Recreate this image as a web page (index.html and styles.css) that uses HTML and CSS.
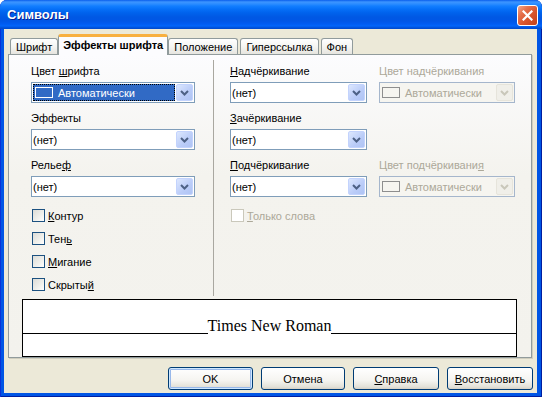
FILE: index.html
```html
<!DOCTYPE html>
<html>
<head>
  <meta charset="utf-8">
  <title>Символы</title>
  <link rel="stylesheet" href="styles.css">
</head>
<body>

<div class="window">

  <div class="titlebar">
    <span class="title">Символы</span>
    <span class="close">
      <svg width="11" height="11" viewBox="0 0 11 11"><path d="M1.5 1.5 L9.5 9.5 M9.5 1.5 L1.5 9.5" stroke="#fff" stroke-width="2.2" stroke-linecap="square"/></svg>
    </span>
  </div>

  <div class="client">

    <div class="tabs">
      <div class="tab">Шрифт</div>
      <div class="tab active">Эффекты шрифта</div>
      <div class="tab">Положение</div>
      <div class="tab">Гиперссылка</div>
      <div class="tab">Фон</div>
    </div>

    <div class="page">
      <div class="columns">

        <div class="col col-left">
          <div class="field">
            <label>Цвет <u>ш</u>рифта</label>
            <div class="combo">
              <span class="combo-value selected"><span class="swatch"></span>Автоматически</span>
              <span class="combo-btn"><svg width="9" height="6" viewBox="0 0 9 6"><path d="M1 1 L4.5 4.5 L8 1" fill="none" stroke="#4D6185" stroke-width="2"/></svg></span>
            </div>
          </div>
          <div class="field">
            <label>Эффекты</label>
            <div class="combo">
              <span class="combo-value">(нет)</span>
              <span class="combo-btn"><svg width="9" height="6" viewBox="0 0 9 6"><path d="M1 1 L4.5 4.5 L8 1" fill="none" stroke="#4D6185" stroke-width="2"/></svg></span>
            </div>
          </div>
          <div class="field">
            <label>Релье<u>ф</u></label>
            <div class="combo">
              <span class="combo-value">(нет)</span>
              <span class="combo-btn"><svg width="9" height="6" viewBox="0 0 9 6"><path d="M1 1 L4.5 4.5 L8 1" fill="none" stroke="#4D6185" stroke-width="2"/></svg></span>
            </div>
          </div>
          <div class="checks">
            <div class="check"><span class="box"></span><span><u>К</u>онтур</span></div>
            <div class="check"><span class="box"></span><span>Тен<u>ь</u></span></div>
            <div class="check"><span class="box"></span><span><u>М</u>игание</span></div>
            <div class="check"><span class="box"></span><span>Скрыты<u>й</u></span></div>
          </div>
        </div>

        <div class="sep"></div>

        <div class="col col-right">
          <div class="row">
            <div class="field wide">
              <label><u>Н</u>адчёркивание</label>
              <div class="combo">
                <span class="combo-value">(нет)</span>
                <span class="combo-btn"><svg width="9" height="6" viewBox="0 0 9 6"><path d="M1 1 L4.5 4.5 L8 1" fill="none" stroke="#4D6185" stroke-width="2"/></svg></span>
              </div>
            </div>
            <div class="field narrow disabled">
              <label>Цвет надчёркивания</label>
              <div class="combo">
                <span class="combo-value"><span class="swatch"></span>Автоматически</span>
                <span class="combo-btn"><svg width="9" height="6" viewBox="0 0 9 6"><path d="M1 1 L4.5 4.5 L8 1" fill="none" stroke="#C9C7BA" stroke-width="2"/></svg></span>
              </div>
            </div>
          </div>
          <div class="row">
            <div class="field wide">
              <label><u>З</u>ачёркивание</label>
              <div class="combo">
                <span class="combo-value">(нет)</span>
                <span class="combo-btn"><svg width="9" height="6" viewBox="0 0 9 6"><path d="M1 1 L4.5 4.5 L8 1" fill="none" stroke="#4D6185" stroke-width="2"/></svg></span>
              </div>
            </div>
          </div>
          <div class="row">
            <div class="field wide">
              <label><u>П</u>одчёркивание</label>
              <div class="combo">
                <span class="combo-value">(нет)</span>
                <span class="combo-btn"><svg width="9" height="6" viewBox="0 0 9 6"><path d="M1 1 L4.5 4.5 L8 1" fill="none" stroke="#4D6185" stroke-width="2"/></svg></span>
              </div>
            </div>
            <div class="field narrow disabled">
              <label>Цвет подчёркивани<u>я</u></label>
              <div class="combo">
                <span class="combo-value"><span class="swatch"></span>Автоматически</span>
                <span class="combo-btn"><svg width="9" height="6" viewBox="0 0 9 6"><path d="M1 1 L4.5 4.5 L8 1" fill="none" stroke="#C9C7BA" stroke-width="2"/></svg></span>
              </div>
            </div>
          </div>
          <div class="checks">
            <div class="check disabled"><span class="box"></span><span><u>Т</u>олько слова</span></div>
          </div>
        </div>

      </div>

      <div class="preview">
        <div class="preview-line">
          <span class="rule"></span>
          <span class="sample">Times New Roman</span>
          <span class="rule"></span>
        </div>
      </div>
    </div>

    <div class="buttons">
      <button type="button" class="btn default">OK</button>
      <button type="button" class="btn cancel">Отмена</button>
      <button type="button" class="btn"><u>С</u>правка</button>
      <button type="button" class="btn"><u>В</u>осстановить</button>
    </div>

  </div>

</div>

</body>
</html>
```

FILE: styles.css
```css
body {
  margin: 0;
  background: #fff;
  font-family: "Liberation Sans", Arial, sans-serif;
  font-size: 11px;
  color: #000;
}

u {
  text-decoration-thickness: 1px;
  text-underline-offset: 1px;
}

.window {
  width: 542px;
  height: 397px;
  display: flex;
  flex-direction: column;
  background: #0055E5;
  border-radius: 7px 7px 0 0;
  box-shadow: inset 1px 0 #0831D9, inset -1px 0 #001EA0, inset 0 -1px #001EA0;
}

/* title bar */

.titlebar {
  height: 29px;
  display: flex;
  align-items: center;
  justify-content: space-between;
  padding: 0 4px 0 7px;
  border-radius: 7px 7px 0 0;
  color: #fff;
  background: linear-gradient(to bottom,
    #0A5EEC 0px, #3D95FF 2px, #2B8CFF 4px, #137EFF 6px, #0670F8 9px,
    #0062EC 13px, #0058E4 17px, #0056E6 21px, #005CF2 24px,
    #0266FA 26px, #0058E6 27px, #0049CB 29px);
}

.title {
  font-weight: bold;
  font-size: 13px;
  text-shadow: 1px 1px #0B1D8F;
}

.close {
  width: 21px;
  height: 21px;
  margin-top: 2px;
  box-sizing: border-box;
  border: 1px solid #fff;
  border-radius: 3px;
  display: flex;
  align-items: center;
  justify-content: center;
  background: linear-gradient(135deg, #F4A88C 0%, #E5704C 30%, #D8552D 60%, #C2401A 100%);
}

/* dialog client area */

.client {
  flex: 1;
  display: flex;
  flex-direction: column;
  margin: 0 5px 4px 4px;
  padding: 0 5px 3px 4px;
  background: #ECE9D8;
}

.tabs {
  height: 25px;
  display: flex;
  align-items: flex-end;
  padding-left: 2px;
}

.tab {
  height: 16px;
  box-sizing: border-box;
  padding: 0 5px;
  margin-right: 2px;
  display: flex;
  align-items: center;
  border: 1px solid #919B9C;
  border-bottom: none;
  border-radius: 3px 3px 0 0;
  background: linear-gradient(#FFFFFF, #F5F5F2 50%, #E6E5DF);
}

.tab.active {
  height: 21px;
  margin: 0 0 -1px -2px;
  padding: 0 4px 3px 4px;
  font-weight: bold;
  border-top: 3px solid #F8B040;
  background: #FCFCFE;
  position: relative;
}

.page {
  height: 304px;
  box-sizing: border-box;
  display: flex;
  flex-direction: column;
  border: 1px solid #919B9C;
  background: linear-gradient(#FCFCFE, #F4F3EE 40%, #F3F2ED);
  box-shadow: 1px 1px #D0CEBF;
}

.columns {
  height: 232px;
  display: flex;
  padding: 9px 0 0 22px;
}

.col {
  display: flex;
  flex-direction: column;
  gap: 8px;
}

.col-left {
  width: 164px;
}

.sep {
  width: 1px;
  margin: -4px 16px 0 18px;
  background: #A9A7A0;
}

.row {
  display: flex;
  gap: 12px;
}

.field {
  display: flex;
  flex-direction: column;
  gap: 4px;
}

.field label {
  height: 14px;
  line-height: 14px;
}

.wide {
  width: 137px;
}

.narrow {
  width: 136px;
}

/* combo boxes */

.combo {
  height: 21px;
  box-sizing: border-box;
  display: flex;
  align-items: center;
  padding-left: 1px;
  border: 1px solid #7F9DB9;
  background: #fff;
}

.combo-value {
  flex: 1;
  display: flex;
  align-items: center;
  white-space: nowrap;
  overflow: hidden;
}

.combo-value.selected {
  align-self: stretch;
  margin: 1px 1px 1px 0;
  border: 1px dotted #fff;
  outline: 1px dotted #000;
  outline-offset: -1px;
  background: #316AC5;
  color: #fff;
}

.swatch {
  width: 18px;
  height: 11px;
  box-sizing: border-box;
  margin: 0 5px 0 1px;
  border: 1px solid #fff;
}

.combo-btn {
  width: 17px;
  height: 17px;
  margin-right: 1px;
  box-sizing: border-box;
  display: flex;
  align-items: center;
  justify-content: center;
  border: 1px solid #C3D3FD;
  border-radius: 2px;
  background: linear-gradient(135deg, #DCE7FE, #BACCF8 60%, #AFC4F4);
}

.disabled {
  color: #ACA899;
}

.disabled .combo {
  border-color: #A5B6CC;
  background: #F6F5F0;
}

.disabled .swatch {
  border-color: #8E8E8E;
}

.disabled .combo-btn {
  border-color: #E6E4DB;
  background: #F0EFE9;
}

/* check boxes */

.checks {
  display: flex;
  flex-direction: column;
  margin-top: -1px;
}

.check {
  height: 23px;
  display: flex;
  align-items: center;
  gap: 3px;
  padding-left: 1px;
}

.box {
  width: 13px;
  height: 13px;
  box-sizing: border-box;
  border: 1px solid #1C5180;
  background: linear-gradient(135deg, #DCDCD7, #F0F0EC 60%, #FFFFFF);
}

.check.disabled .box {
  border-color: #CAC8BB;
  background: #FFFFFF;
}

/* preview */

.preview {
  height: 58px;
  box-sizing: border-box;
  margin: 3px 14px 0 13px;
  border: 1px solid #000;
  background: #fff;
}

.preview-line {
  height: 34px;
  display: flex;
  align-items: flex-end;
}

.rule {
  flex: 1;
  border-bottom: 1px solid #000;
}

.sample {
  font-family: "Liberation Serif", "Times New Roman", serif;
  font-size: 16px;
  line-height: 16px;
}

/* buttons */

.buttons {
  display: flex;
  justify-content: flex-end;
  gap: 8px;
  margin: 9px -1px 0 0;
}

.btn {
  width: 86px;
  height: 23px;
  padding: 0;
  font-family: inherit;
  font-size: 11px;
  color: #000;
  border: 1px solid #003C74;
  border-radius: 3px;
  background: linear-gradient(#FFFFFF, #F5F4F0 60%, #E3E1D8 90%, #D6D0C5);
}

.btn.default {
  width: 85px;
  box-shadow: inset 0 0 0 1px #CEE7FF, inset 0 0 0 2px #98B8EA;
}

.btn.cancel {
  width: 84px;
}
```
